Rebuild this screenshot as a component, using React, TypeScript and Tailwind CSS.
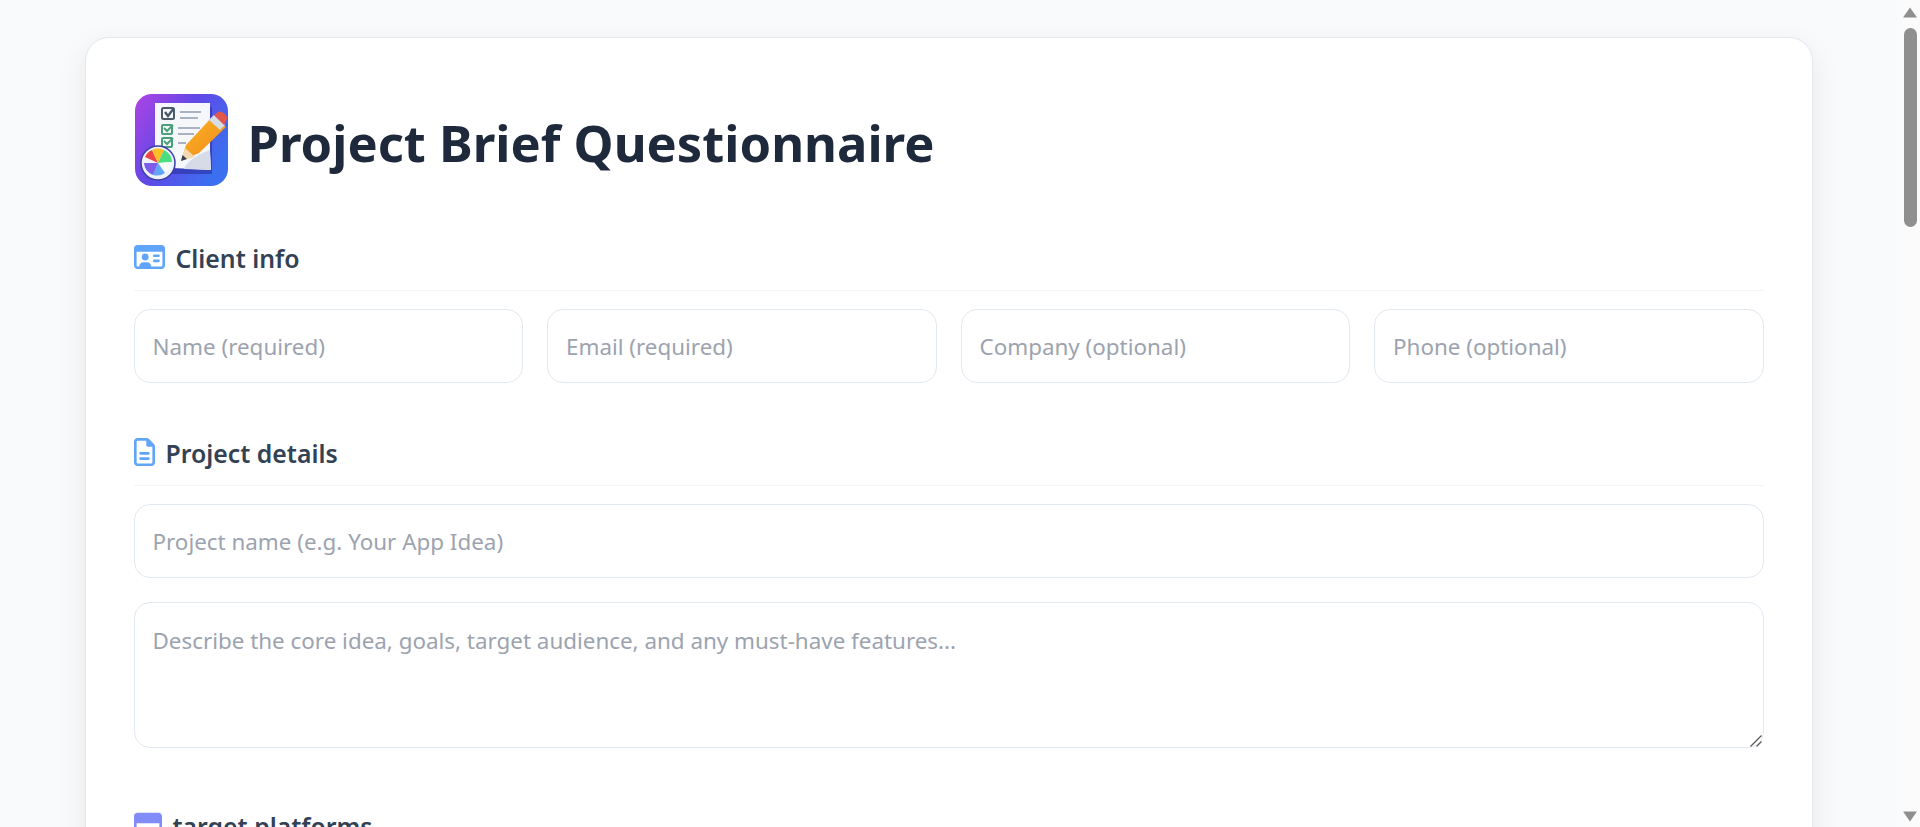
import React from "react";
import { FaRegFileLines, FaRegIdCard, FaRegWindowMaximize } from "react-icons/fa6";

const fieldClass =
  "w-full h-[74px] rounded-2xl border border-[#e2e8f0] bg-white px-[18px] text-[22.4px] text-[#1e293b] outline-none placeholder:text-[#9ca3af]";

function Logo() {
  return (
    <svg viewBox="0 0 96 96" className="h-[96px] w-[96px] shrink-0 blur-[0.4px]">
      <defs>
        <linearGradient id="logoBg" x1="0" y1="0" x2="1" y2="0.6">
          <stop offset="0" stopColor="#b044e4" />
          <stop offset="0.5" stopColor="#6148e6" />
          <stop offset="1" stopColor="#3b6ff0" />
        </linearGradient>
        <linearGradient id="pencil" x1="0" y1="0" x2="1" y2="1">
          <stop offset="0" stopColor="#fdb52e" />
          <stop offset="1" stopColor="#ee8a12" />
        </linearGradient>
      </defs>
      <rect x="1" y="1" width="93" height="92" rx="17" fill="url(#logoBg)" />
      <path d="M26 14h52v67H36z" fill="#2a2f9e" opacity="0.6" />
      <path d="M21 10h55v50l1 17-38-2-18-10z" fill="#f6f7fb" />
      <path d="M50 76c2-7 14-15 26-19l1 20z" fill="#d7dbe8" />
      <g fill="none" strokeWidth="2">
        <rect x="28" y="15" width="12" height="11" rx="1.5" stroke="#4b5a68" />
        <path d="M31 19l3 4 6-8" stroke="#4b5a68" strokeWidth="2.4" />
        <rect x="28" y="32" width="10" height="9" rx="1" stroke="#4a9e78" />
        <path d="M30 35l3 3 6-6" stroke="#4a9e78" />
        <rect x="28" y="45" width="10" height="9" rx="1" stroke="#4a9e78" />
        <path d="M30 48l3 3 6-6" stroke="#4a9e78" />
        <path d="M46 19h21M46 25h18M44 35h22M44 41h16M44 50h8" stroke="#a8b2c0" />
      </g>
      <path d="M47 68l5-16 27-29 13 11-27 26z" fill="url(#pencil)" />
      <path d="M47 68l4-13 10 9z" fill="#f3d9b0" />
      <path d="M47 68l1.500-6 4.500 4z" fill="#38404f" />
      <path d="M75 27l5-5 11 10-5 5z" fill="#d8dde4" />
      <path d="M80 22l4-3c2-1 5 0 7 2s3 5 1 7l-2 4z" fill="#e2574c" />
      <circle cx="24" cy="70" r="17" fill="#eef0fa" stroke="#3a3fa8" strokeWidth="1.5" />
      <path d="M24 70L11 64a14 14 0 0 1 7-7z" fill="#ef4444" />
      <path d="M24 70l-6-13a14 14 0 0 1 12 0z" fill="#fbbf24" />
      <path d="M24 70l6-13a14 14 0 0 1 8 12z" fill="#4ade80" />
      <path d="M24 70l14-1a14 14 0 0 1-7 11z" fill="#f8fafc" />
      <path d="M24 70l7 10a14 14 0 0 1-12 2z" fill="#60a5fa" />
      <path d="M24 70l-5 12a14 14 0 0 1-9-12z" fill="#7c5ce8" />
    </svg>
  );
}

function SectionTitle({ icon, title }: { icon: React.ReactNode; title: string }) {
  return (
    <div className="flex h-[48px] items-start gap-[11px] border-b border-[#f1f5f9]">
      {icon}
      <h2 className="text-[24.8px] leading-[30px] font-semibold text-[#334155]">{title}</h2>
    </div>
  );
}

function Scrollbar() {
  return (
    <aside className="flex h-screen w-[23px] shrink-0 flex-col items-center bg-[#fbfbfc]">
      <svg viewBox="0 0 14 11" className="mt-[7px] ml-[3px] h-[11px] w-[14px]">
        <path d="M7 0.5L14 10.5H0z" fill="#8f8f8f" />
      </svg>
      <div className="mt-[10px] ml-[3px] h-[199px] w-[13px] rounded-full bg-[#8f8f8f]" />
      <svg viewBox="0 0 14 11" className="mt-auto mb-[5px] ml-[3px] h-[11px] w-[14px]">
        <path d="M0 0.5H14L7 10.5z" fill="#8f8f8f" />
      </svg>
    </aside>
  );
}

export default function App() {
  return (
    <div className="flex h-screen overflow-hidden bg-[#f8fafc] font-['Noto_Sans',sans-serif]">
      <main className="h-screen min-w-0 flex-1 overflow-hidden px-[84.5px] pt-[37px]">
        <div className="rounded-3xl border border-[#e2e8f0] bg-white px-[48px] pt-[55px] pb-[40px] shadow-[0_10px_30px_rgba(0,0,0,0.08)]">
          <div className="mb-[54px] flex items-center gap-[18px]">
            <Logo />
            <h1 className="mt-[3px] text-[50.7px] leading-[60px] font-bold text-[#1e293b]">
              Project Brief Questionnaire
            </h1>
          </div>

          <section className="mb-[55px]">
            <SectionTitle
              icon={<FaRegIdCard className="h-[28px] w-[31px] text-[#60a5fa]" />}
              title="Client info"
            />
            <div className="mt-[18px] grid grid-cols-4 gap-[24px]">
              <input className={fieldClass} placeholder="Name (required)" />
              <input className={fieldClass} placeholder="Email (required)" />
              <input className={fieldClass} placeholder="Company (optional)" />
              <input className={fieldClass} placeholder="Phone (optional)" />
            </div>
          </section>

          <section className="mb-[63px]">
            <SectionTitle
              icon={<FaRegFileLines className="h-[28px] w-[21px] text-[#60a5fa]" />}
              title="Project details"
            />
            <input className={`${fieldClass} mt-[18px] block`} placeholder="Project name (e.g. Your App Idea)" />
            <div className="relative mt-[24px]">
              <textarea
                className="block h-[146px] w-full resize-none rounded-2xl border border-[#e2e8f0] bg-white px-[18px] py-[23px] text-[22.4px] leading-[30px] text-[#1e293b] outline-none placeholder:text-[#9ca3af]"
                placeholder="Describe the core idea, goals, target audience, and any must-have features..."
              />
              <svg viewBox="0 0 12 12" className="absolute right-[2px] bottom-[1px] h-[12px] w-[12px]">
                <path d="M11.500 0.500L0.500 11.500M11.500 6.500L6.500 11.500" stroke="#555555" strokeWidth="1.200" fill="none" />
              </svg>
            </div>
          </section>

          <section>
            <SectionTitle
              icon={<FaRegWindowMaximize className="h-[28px] w-[28px] text-[#818cf8]" />}
              title="target platforms"
            />
          </section>
        </div>
      </main>
      <Scrollbar />
    </div>
  );
}
